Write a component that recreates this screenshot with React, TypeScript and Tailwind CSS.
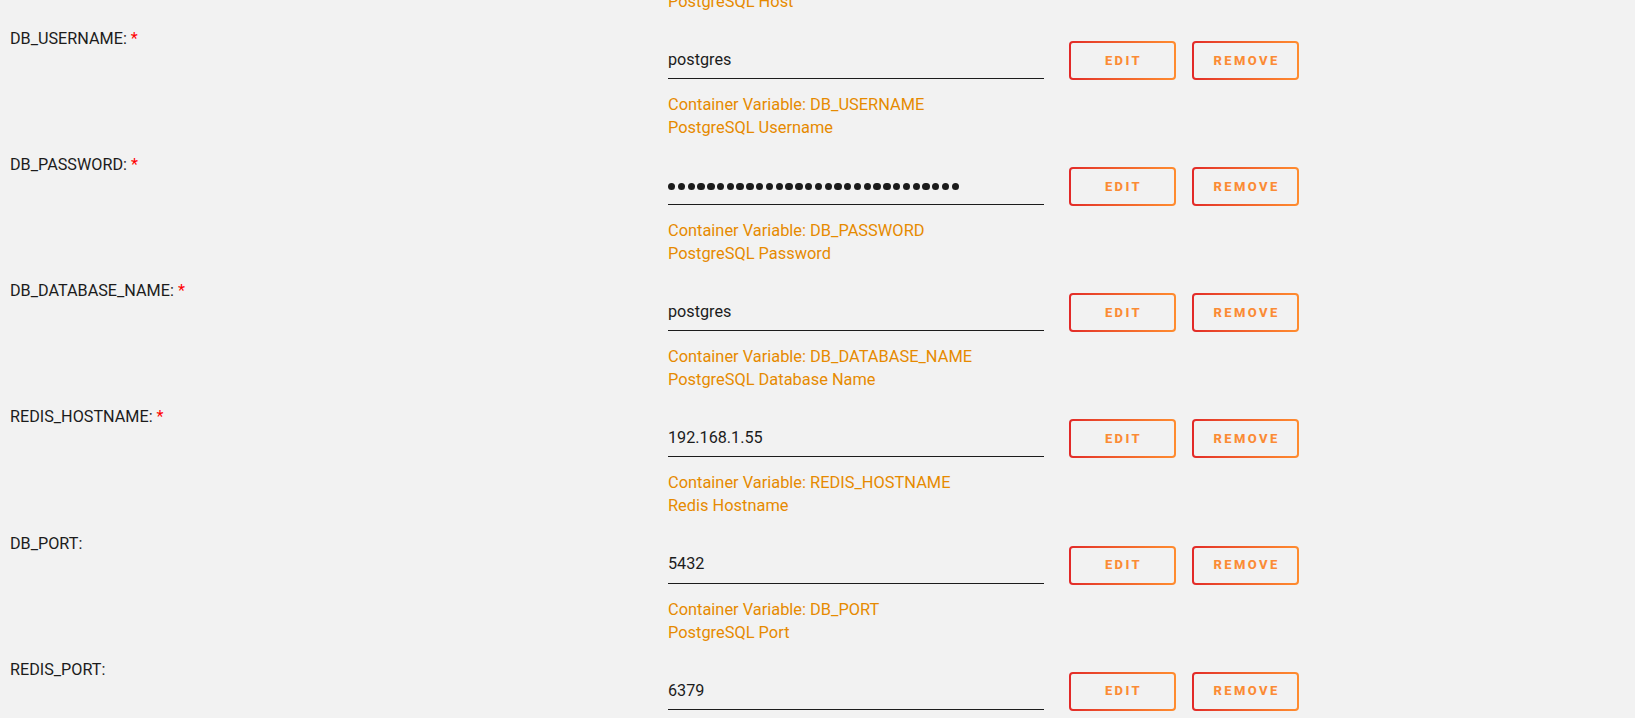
import React from 'react';

interface Field {
    name: string;
    value: string;
    description: string;
    required?: boolean;
    secret?: boolean;
}

const fields: Field[] = [
    { name: 'DB_HOSTNAME', value: '192.168.1.55', description: 'PostgreSQL Host', required: true },
    { name: 'DB_USERNAME', value: 'postgres', description: 'PostgreSQL Username', required: true },
    { name: 'DB_PASSWORD', value: '••••••••••••••••••••••••••••••', description: 'PostgreSQL Password', required: true, secret: true },
    { name: 'DB_DATABASE_NAME', value: 'postgres', description: 'PostgreSQL Database Name', required: true },
    { name: 'REDIS_HOSTNAME', value: '192.168.1.55', description: 'Redis Hostname', required: true },
    { name: 'DB_PORT', value: '5432', description: 'PostgreSQL Port' },
    { name: 'REDIS_PORT', value: '6379', description: 'Redis Port' },
];

function GradientButton({ label }: { label: string }) {
    return (
        <button className="w-[107px] h-[39px] p-[2px] rounded-[4px] bg-gradient-to-r from-[#e22828] to-[#ff8c2f]">
            <span className="flex h-full w-full items-center justify-center rounded-[2px] bg-[#f2f2f2] pl-[2px] text-[13px] font-extrabold tracking-[2.4px] text-[#fb8b35]">
                {label}
            </span>
        </button>
    );
}

function FieldRow({ field, first }: { field: Field; first?: boolean }) {
    return (
        <div className={`flex ${first ? '-mt-[97.4px]' : ''}`}>
            {/* Label */}
            <div className="w-[668px] shrink-0 pl-[10px] text-[16.2px] leading-[20px] text-[#1c1c1c]">
                {field.name}:
                {field.required && <span className="text-[#ff0000]"> *</span>}
            </div>

            {/* Value, actions and hint */}
            <div className="pt-[12px] pb-[16.2px]">
                <div className="flex items-center h-[39px]">
                    <div className="w-[376px] h-[37px] flex items-center border-b-[1.5px] border-[#1c1c1c] text-[16.2px] text-[#1c1c1c]">
                        {field.secret ? (
                            <div className="flex gap-[2.4px] pt-[1px]">
                                {Array.from({ length: 30 }).map((_, i) => (
                                    <span key={i} className="block w-[7.4px] h-[7.4px] rounded-full bg-[#1c1c1c]" />
                                ))}
                            </div>
                        ) : (
                            <span>{field.value}</span>
                        )}
                    </div>
                    <div className="flex gap-[16px] ml-[25px]">
                        <GradientButton label="EDIT" />
                        <GradientButton label="REMOVE" />
                    </div>
                </div>
                <div className="mt-[13px] text-[16.4px] leading-[23px] text-[#e68a00]">
                    <div>Container Variable: {field.name}</div>
                    <div>{field.description}</div>
                </div>
            </div>
        </div>
    );
}

export default function App() {
    return (
        <div className="h-[718px] overflow-hidden bg-[#f2f2f2]" style={{ fontFamily: 'Roboto, "Noto Sans", sans-serif' }}>
            {fields.map((f, i) => (
                <FieldRow key={f.name} field={f} first={i === 0} />
            ))}
        </div>
    );
}
